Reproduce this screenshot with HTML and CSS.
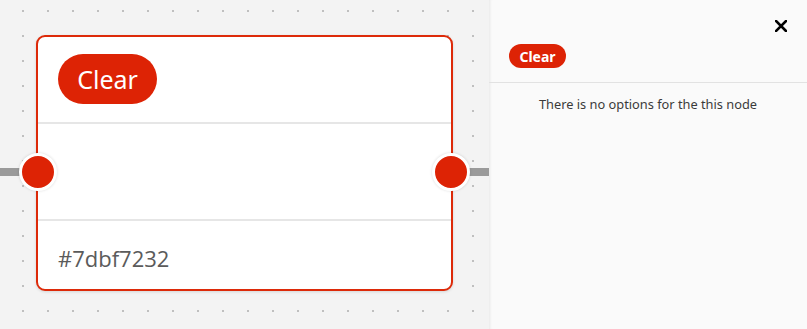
FILE: index.html
```html
<!DOCTYPE html>
<html>
<head>
<meta charset="utf-8">
<link rel="stylesheet" href="styles.css">
</head>
<body>
<div class="app">
  <div class="canvas">
    <div class="edge edge-left"></div>
    <div class="edge edge-right"></div>
    <div class="node">
      <div class="node-head"><span class="pill">Clear</span></div>
      <div class="node-body"></div>
      <div class="node-foot">#7dbf7232</div>
      <span class="handle handle-left"></span>
      <span class="handle handle-right"></span>
    </div>
  </div>
  <aside class="panel">
    <div class="panel-head">
      <button class="close" aria-label="Close">
        <svg width="12" height="12" viewBox="0 0 12 12"><path d="M1 1L11 11M11 1L1 11" stroke="#000" stroke-width="2.6" stroke-linecap="square"/></svg>
      </button>
      <span class="badge">Clear</span>
    </div>
    <p class="empty">There is no options for the this node</p>
  </aside>
</div>
</body>
</html>
```
FILE: styles.css
```css
* { box-sizing: border-box; }
html, body { margin: 0; padding: 0; }
body { width: 807px; height: 329px; overflow: hidden; font-family: "Noto Sans", "Open Sans", sans-serif; }
.app { display: flex; width: 807px; height: 329px; }
.canvas {
  position: relative;
  flex: 0 0 489px;
  background-color: #f3f3f3;
  background-image: radial-gradient(circle at 2px 2px, #bfbfbf 0.9px, transparent 1.4px);
  background-size: 25px 25px;
  background-position: 21px 9px;
}
.edge { position: absolute; top: 168px; height: 8px; background: #9a9a9a; }
.edge-left { left: 0; width: 24px; }
.edge-right { left: 466px; width: 23px; }
.node {
  position: absolute;
  left: 36px; top: 35px;
  width: 417px; height: 256px;
  background: #fff;
  border: 2px solid #dd2a09;
  border-radius: 9px;
  display: flex; flex-direction: column;
  box-shadow: 0 1px 3px rgba(0,0,0,0.12);
}
.node-head { height: 87px; display: flex; align-items: center; padding: 0 0 2px 20px; border-bottom: 2px solid #e6e6e6; }
.pill {
  display: inline-flex; align-items: center; justify-content: center;
  height: 50px; width: 99px;
  border-radius: 25px;
  background: #dd2305;
  color: #fff;
  font-size: 25px;
  font-family: "Noto Sans", sans-serif;
}
.node-body { height: 97px; border-bottom: 2px solid #e6e6e6; }
.node-foot { flex: 1; display: flex; align-items: center; padding: 6px 0 0 20px; font-family: "Open Sans", sans-serif; font-size: 22px; color: #5b5b5b; }
.handle {
  position: absolute; top: 116px;
  width: 38px; height: 38px;
  border-radius: 50%;
  background: #dd2305;
  border: 3px solid #fff;
  box-shadow: 0 0 3px rgba(0,0,0,0.15);
}
.handle-left { left: -19px; }
.handle-right { right: -19px; }
.panel {
  flex: 1;
  background: #fafafa;
  box-shadow: inset 3px 0 3px -2px rgba(0,0,0,0.08);
}
.panel-head { position: relative; height: 83px; border-bottom: 1px solid #e2e2e2; padding: 44px 0 0 20px; }
.close { position: absolute; right: 19px; top: 19px; width: 14px; height: 14px; padding: 0; border: 0; background: none; display: flex; align-items: center; justify-content: center; }
.badge {
  display: inline-flex; align-items: center; justify-content: center;
  height: 24px; width: 57px; border-radius: 12px;
  background: #dd2305; color: #fff;
  font-weight: 700; font-size: 14px;
}
.empty { margin: 12px 0 0; text-align: center; font-size: 12.8px; color: #3a3a3a; }
```
